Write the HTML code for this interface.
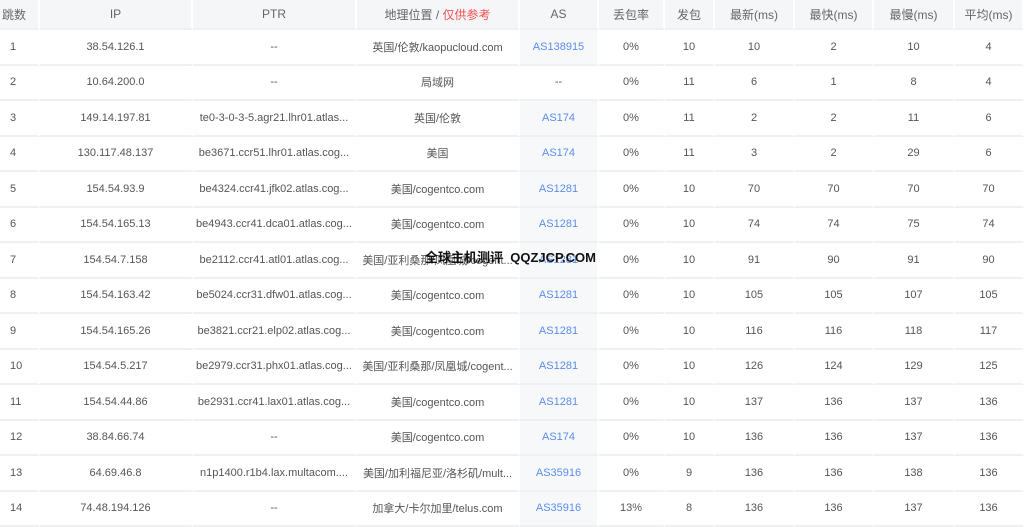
<!DOCTYPE html>
<html><head><meta charset="utf-8"><style>
body{margin:0;width:1024px;height:521px;overflow:hidden;background:#fff;font-family:"Liberation Sans","Noto Sans CJK SC",sans-serif;font-size:11px;color:#555;position:relative}
table{border-collapse:separate;border-spacing:0;table-layout:fixed;width:1024px}
td,th{text-align:center;white-space:nowrap;overflow:hidden;padding:0;border-right:2px solid #fff;border-bottom:2px solid #eef0f2}
th{height:28px;background:#f5f6f7;font-weight:normal;color:#666;font-size:12px}
td{height:33.5px}
td:first-child,th:first-child{text-align:left;padding-left:10px}
th:first-child{padding-left:2px}
td.as{background:#f7f8fa;color:#5b8def}
.r{color:#f05050}
.wm{position:absolute;left:425px;top:247px;font-weight:bold;font-size:13px;color:#111;white-space:nowrap}
</style></head><body>
<table>
<colgroup><col style="width:40px"><col style="width:153px"><col style="width:164px"><col style="width:163px"><col style="width:79px"><col style="width:66px"><col style="width:50px"><col style="width:80px"><col style="width:79px"><col style="width:81px"><col style="width:69px"></colgroup>
<tr><th>跳数</th><th>IP</th><th>PTR</th><th>地理位置 / <span class="r">仅供参考</span></th><th>AS</th><th>丢包率</th><th>发包</th><th>最新(ms)</th><th>最快(ms)</th><th>最慢(ms)</th><th>平均(ms)</th></tr>
<tr><td>1</td><td>38.54.126.1</td><td>--</td><td>英国/伦敦/kaopucloud.com</td><td class="as">AS138915</td><td>0%</td><td>10</td><td>10</td><td>2</td><td>10</td><td>4</td></tr>
<tr><td>2</td><td>10.64.200.0</td><td>--</td><td>局域网</td><td>--</td><td>0%</td><td>11</td><td>6</td><td>1</td><td>8</td><td>4</td></tr>
<tr><td>3</td><td>149.14.197.81</td><td>te0-3-0-3-5.agr21.lhr01.atlas...</td><td>英国/伦敦</td><td class="as">AS174</td><td>0%</td><td>11</td><td>2</td><td>2</td><td>11</td><td>6</td></tr>
<tr><td>4</td><td>130.117.48.137</td><td>be3671.ccr51.lhr01.atlas.cog...</td><td>美国</td><td class="as">AS174</td><td>0%</td><td>11</td><td>3</td><td>2</td><td>29</td><td>6</td></tr>
<tr><td>5</td><td>154.54.93.9</td><td>be4324.ccr41.jfk02.atlas.cog...</td><td>美国/cogentco.com</td><td class="as">AS1281</td><td>0%</td><td>10</td><td>70</td><td>70</td><td>70</td><td>70</td></tr>
<tr><td>6</td><td>154.54.165.13</td><td>be4943.ccr41.dca01.atlas.cog...</td><td>美国/cogentco.com</td><td class="as">AS1281</td><td>0%</td><td>10</td><td>74</td><td>74</td><td>75</td><td>74</td></tr>
<tr><td>7</td><td>154.54.7.158</td><td>be2112.ccr41.atl01.atlas.cog...</td><td>美国/亚利桑那/凤凰城/cogent...</td><td class="as">AS1281</td><td>0%</td><td>10</td><td>91</td><td>90</td><td>91</td><td>90</td></tr>
<tr><td>8</td><td>154.54.163.42</td><td>be5024.ccr31.dfw01.atlas.cog...</td><td>美国/cogentco.com</td><td class="as">AS1281</td><td>0%</td><td>10</td><td>105</td><td>105</td><td>107</td><td>105</td></tr>
<tr><td>9</td><td>154.54.165.26</td><td>be3821.ccr21.elp02.atlas.cog...</td><td>美国/cogentco.com</td><td class="as">AS1281</td><td>0%</td><td>10</td><td>116</td><td>116</td><td>118</td><td>117</td></tr>
<tr><td>10</td><td>154.54.5.217</td><td>be2979.ccr31.phx01.atlas.cog...</td><td>美国/亚利桑那/凤凰城/cogent...</td><td class="as">AS1281</td><td>0%</td><td>10</td><td>126</td><td>124</td><td>129</td><td>125</td></tr>
<tr><td>11</td><td>154.54.44.86</td><td>be2931.ccr41.lax01.atlas.cog...</td><td>美国/cogentco.com</td><td class="as">AS1281</td><td>0%</td><td>10</td><td>137</td><td>136</td><td>137</td><td>136</td></tr>
<tr><td>12</td><td>38.84.66.74</td><td>--</td><td>美国/cogentco.com</td><td class="as">AS174</td><td>0%</td><td>10</td><td>136</td><td>136</td><td>137</td><td>136</td></tr>
<tr><td>13</td><td>64.69.46.8</td><td>n1p1400.r1b4.lax.multacom....</td><td>美国/加利福尼亚/洛杉矶/mult...</td><td class="as">AS35916</td><td>0%</td><td>9</td><td>136</td><td>136</td><td>138</td><td>136</td></tr>
<tr><td>14</td><td>74.48.194.126</td><td>--</td><td>加拿大/卡尔加里/telus.com</td><td class="as">AS35916</td><td>13%</td><td>8</td><td>136</td><td>136</td><td>137</td><td>136</td></tr>
</table>
<div class="wm">全球主机测评 &nbsp;QQZJCP.COM</div>
</body></html>
